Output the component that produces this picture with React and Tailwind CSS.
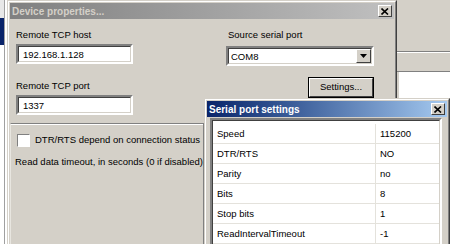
import React from 'react'

const font = { fontFamily: '"Liberation Sans", Arial, sans-serif' }

const CloseButton = () => (
    <div className="w-[14px] h-[12px] bg-[#d4d0c8] border border-t-white border-l-white border-r-[#404040] border-b-[#404040] flex items-center justify-center">
        <svg width="8" height="7" viewBox="0 0 8 7">
            <path d="M0.5 0.5 L7 6.5 M7 0.5 L0.5 6.5" stroke="#000" strokeWidth="1.6" />
        </svg>
    </div>
)

const Sunken = ({ className = '', children }) => (
    <div className={`border-2 border-t-[#808080] border-l-[#808080] border-r-white border-b-white ${className}`}>
        <div className="h-full w-full border border-t-[#404040] border-l-[#404040] border-r-[#d4d0c8] border-b-[#d4d0c8] bg-white">
            {children}
        </div>
    </div>
)

const rows = [
    ['Speed', '115200'],
    ['DTR/RTS', 'NO'],
    ['Parity', 'no'],
    ['Bits', '8'],
    ['Stop bits', '1'],
    ['ReadIntervalTimeout', '-1'],
]

export default function App() {
    return (
        <div className="relative w-[450px] h-[244px] overflow-hidden bg-white text-[9.5px] text-black" style={font}>
            {/* left strip of the window behind */}
            <div className="absolute left-0 top-0 h-full w-[7px] flex">
                <div className="w-[4px] h-full flex flex-col">
                    <div className="h-[18px] bg-[#e8e8e8]" />
                    <div className="h-[27px] bg-[#0a246a]" />
                    <div className="flex-1 bg-white" />
                </div>
                <div className="w-px h-full bg-[#a0a0a0]" />
                <div className="flex-1 bg-white" />
            </div>

            {/* window behind on the right */}
            <div className="absolute left-[396px] top-0 right-0 h-full bg-[#d4d0c8] flex flex-col">
                <div className="h-[51px]" />
                <div className="h-px bg-[#808080]" />
                <div className="h-px bg-white" />
                <div className="h-[18px]" />
                <div className="h-px bg-[#808080]" />
                <div className="flex-1 bg-white ml-[3px]" />
            </div>

            {/* Device properties dialog */}
            <div className="absolute left-[7px] top-0 w-[390px] h-[260px] bg-[#d4d0c8] border border-t-[#d4d0c8] border-l-[#d4d0c8] border-r-[#404040] border-b-[#404040]">
                <div className="h-full border border-t-white border-l-white border-r-[#808080] border-b-[#808080] p-px">
                    <div className="h-[16px] bg-gradient-to-r from-[#808080] to-[#c0c0c0] flex items-center justify-between pl-[2px] pr-[2px]">
                        <span className="font-bold text-[10px] text-[#d4d0c8]">Device properties...</span>
                        <CloseButton />
                    </div>

                    <div className="flex pl-[6px] pt-[10px]">
                        <div className="w-[117px] flex flex-col">
                            <div className="h-[12px] leading-[12px]">Remote TCP host</div>
                            <Sunken className="mt-[3px] h-[20px]">
                                <div className="pl-[4px] leading-[16px]">192.168.1.128</div>
                            </Sunken>
                            <div className="mt-[16px] h-[12px] leading-[12px]">Remote TCP port</div>
                            <Sunken className="mt-[3px] h-[20px]">
                                <div className="pl-[4px] leading-[16px]">1337</div>
                            </Sunken>
                        </div>

                        <div className="ml-[93px] w-[148px] flex flex-col">
                            <div className="h-[12px] leading-[12px] pl-[2px]">Source serial port</div>
                            <Sunken className="mt-[5px] h-[20px]">
                                <div className="flex h-full">
                                    <div className="flex-1 pl-[2px] leading-[16px]">COM8</div>
                                    <div className="w-[15px] h-full bg-[#d4d0c8] border border-t-white border-l-white border-r-[#404040] border-b-[#404040] flex items-center justify-center">
                                        <svg width="7" height="4" viewBox="0 0 7 4">
                                            <path d="M0 0 H7 L3.5 4 Z" fill="#000" />
                                        </svg>
                                    </div>
                                </div>
                            </Sunken>
                            <div className="mt-[11px] self-end w-[66px] h-[21px] border border-black">
                                <div className="h-full border border-t-white border-l-white border-r-[#404040] border-b-[#404040] flex items-center justify-center">
                                    Settings...
                                </div>
                            </div>
                        </div>
                    </div>

                    {/* lower panel */}
                    <div className="mt-[8px] w-[195px] h-[140px] border-t border-l border-r-2 border-t-[#808080] border-l-[#e8e6e0] border-r-[#808080]">
                        <div className="h-full border-t border-t-white pt-[9px] pl-[6px]">
                            <div className="flex items-center h-[13px]">
                                <div className="w-[13px] h-[13px] bg-white border border-t-[#808080] border-l-[#808080] border-r-white border-b-white" />
                                <span className="ml-[5px]">DTR/RTS depend on connection status</span>
                            </div>
                            <div className="mt-[8px] -ml-[2px]">Read data timeout, in seconds (0 if disabled)</div>
                        </div>
                    </div>
                </div>
            </div>

            {/* Serial port settings dialog */}
            <div className="absolute left-[204px] top-[98px] w-[246px] h-[160px] bg-[#d4d0c8] border border-t-[#d4d0c8] border-l-[#d4d0c8] border-r-[#404040] border-b-[#404040]">
                <div className="h-full border border-t-white border-l-white border-r-[#808080] border-b-[#808080] p-px">
                    <div className="h-[16px] bg-gradient-to-r from-[#0a246a] to-[#a6caf0] flex items-center justify-between pl-[2px] pr-[2px]">
                        <span className="font-bold text-[10px] text-white">Serial port settings</span>
                        <CloseButton />
                    </div>
                    <Sunken className="mt-px ml-[3px] mr-[5px] h-[140px]">
                        <div className="pt-[3px]">
                            {rows.map(([name, value]) => (
                                <div key={name} className="flex h-[20px] border-b border-[#e4e2dc]">
                                    <div className="w-[163px] border-r border-[#e4e2dc] pl-[4px] leading-[19px]">{name}</div>
                                    <div className="flex-1 pl-[4px] leading-[19px]">{value}</div>
                                </div>
                            ))}
                        </div>
                    </Sunken>
                </div>
            </div>
        </div>
    )
}
